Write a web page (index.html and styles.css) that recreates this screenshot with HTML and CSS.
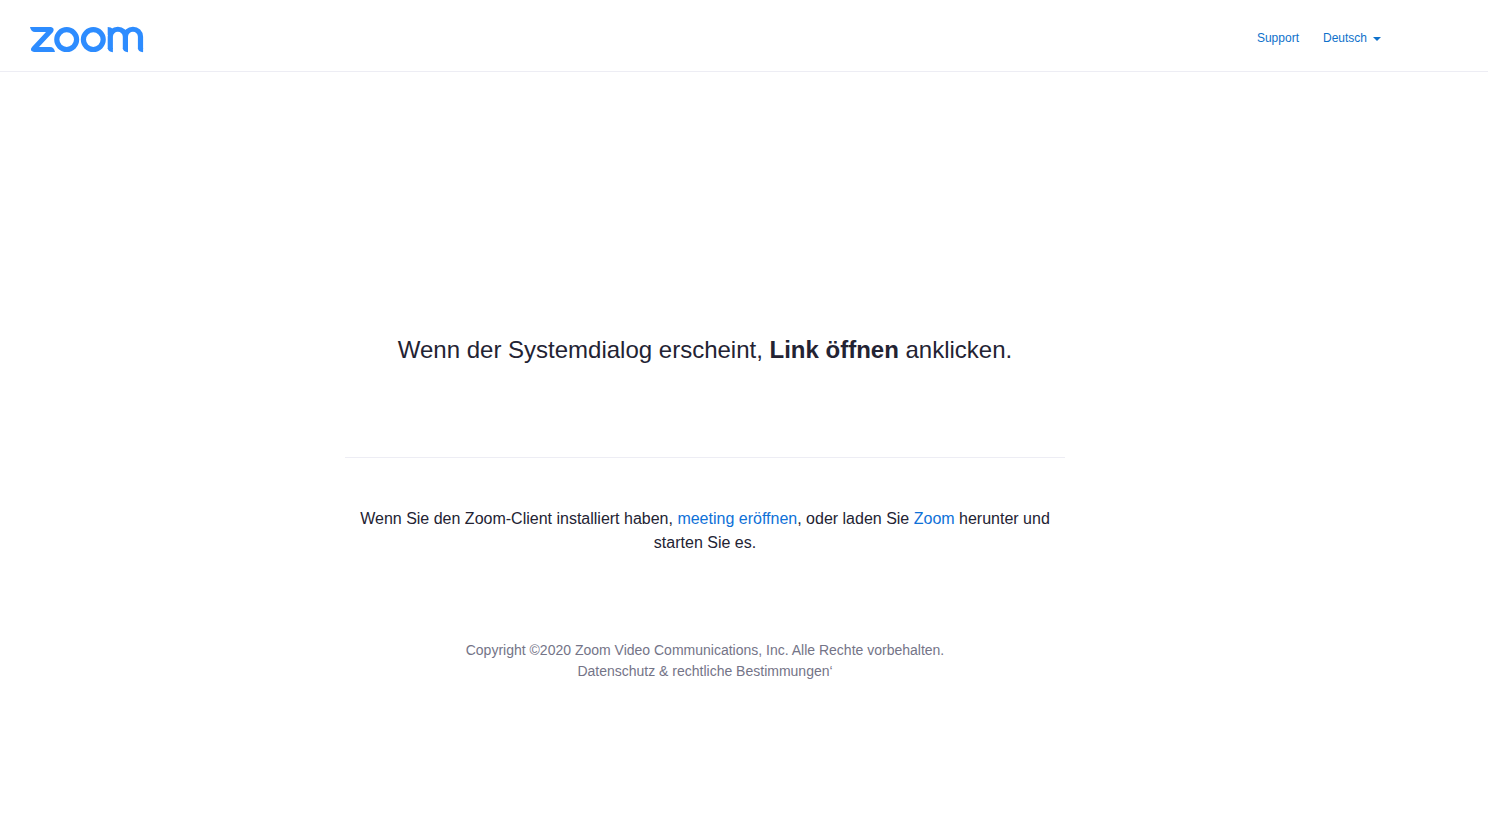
FILE: index.html
```
<!DOCTYPE html>
<html lang="de">
<head>
    <meta charset="UTF-8">
    <meta name="viewport" content="width=device-width, initial-scale=1.0">
    <title>Meeting eröffnen - Zoom</title>
    <link rel="stylesheet" href="styles.css">
</head>
<body>
    <header class="header">
        <a href="#" class="logo" aria-label="Zoom">
            <svg width="114" height="26" viewBox="0 0 114 26" fill="none" stroke="#2d8cff" stroke-width="5.2">
                <path d="M0 0H21Q25 1 23 5L9 20H20Q24 20 25 25H4Q-1 24 2 20L16 5H5Q1 5 0 0Z" fill="#2d8cff" stroke="none"/>
                <circle cx="36.7" cy="12.6" r="9.9"/>
                <circle cx="63.3" cy="12.6" r="9.9"/>
                <path d="M80.3 22V9.8a7.3 7.3 0 0 1 15.1 0V22M95.4 9.8a7.3 7.3 0 0 1 15.1 0V22"/>
                <path d="M77.7 0Q81 0 83 2L82.9 8H77.7ZM77.7 21H82.9V25.2Q78 25 77.7 21ZM92.8 21H98V25.2Q93 25 92.8 21ZM107.9 21H113.1V25.2Q108 25 107.9 21Z" fill="#2d8cff" stroke="none"/>
            </svg>
        </a>
        <nav class="nav">
            <a href="#">Support</a>
            <button type="button" class="language">Deutsch <span class="caret"></span></button>
        </nav>
    </header>

    <main class="content">
        <h1 class="title">Wenn der Systemdialog erscheint, <b>Link öffnen</b> anklicken.</h1>
        <p class="hint">Wenn Sie den Zoom-Client installiert haben, <a href="#">meeting eröffnen</a>, oder laden Sie <a href="#">Zoom</a> herunter und starten Sie es.</p>
    </main>

    <footer class="footer">
        <p>Copyright ©2020 Zoom Video Communications, Inc. Alle Rechte vorbehalten.</p>
        <a href="#">Datenschutz &amp; rechtliche Bestimmungen‘</a>
    </footer>
</body>
</html>
```

FILE: styles.css
```
* {
    box-sizing: border-box;
}
body {
    margin: 0;
    background: #fff;
    color: #232333;
    font-family: "Liberation Sans", Arial, sans-serif;
    font-size: 16px;
    line-height: 24px;
}
a {
    color: #0e71d8;
    text-decoration: none;
}
p {
    margin: 0;
}
.header {
    display: flex;
    justify-content: space-between;
    align-items: center;
    height: 72px;
    padding: 8px 107px 0 30px;
    border-bottom: 1px solid #ededf4;
}
.logo svg {
    display: block;
    overflow: visible;
}
.nav {
    display: flex;
    gap: 24px;
    margin-bottom: 4px;
    font-size: 12px;
}
.nav a,
.language {
    color: #0e71cb;
}
.language {
    display: flex;
    align-items: center;
    gap: 6px;
    padding: 0;
    border: none;
    background: none;
    font: inherit;
    cursor: pointer;
}
.caret {
    margin-top: 2px;
    border-top: 4px solid;
    border-right: 4px solid transparent;
    border-left: 4px solid transparent;
}
/* both blocks are centred in the page minus the right gutter */
.content,
.footer {
    padding-right: 78px;
    text-align: center;
}
.title {
    max-width: 720px;
    margin: 0 auto;
    padding: 260px 0 89px;
    border-bottom: 1px solid #ededf4;
    font-size: 24px;
    font-weight: 400;
    line-height: 36px;
}
.hint {
    max-width: 720px;
    margin: 0 auto;
    padding: 49px 14px 0;
}
.footer {
    padding-top: 85px;
    padding-bottom: 48px;
    color: #747487;
    font-size: 14px;
    line-height: 21px;
}
.footer a {
    color: inherit;
}
```
